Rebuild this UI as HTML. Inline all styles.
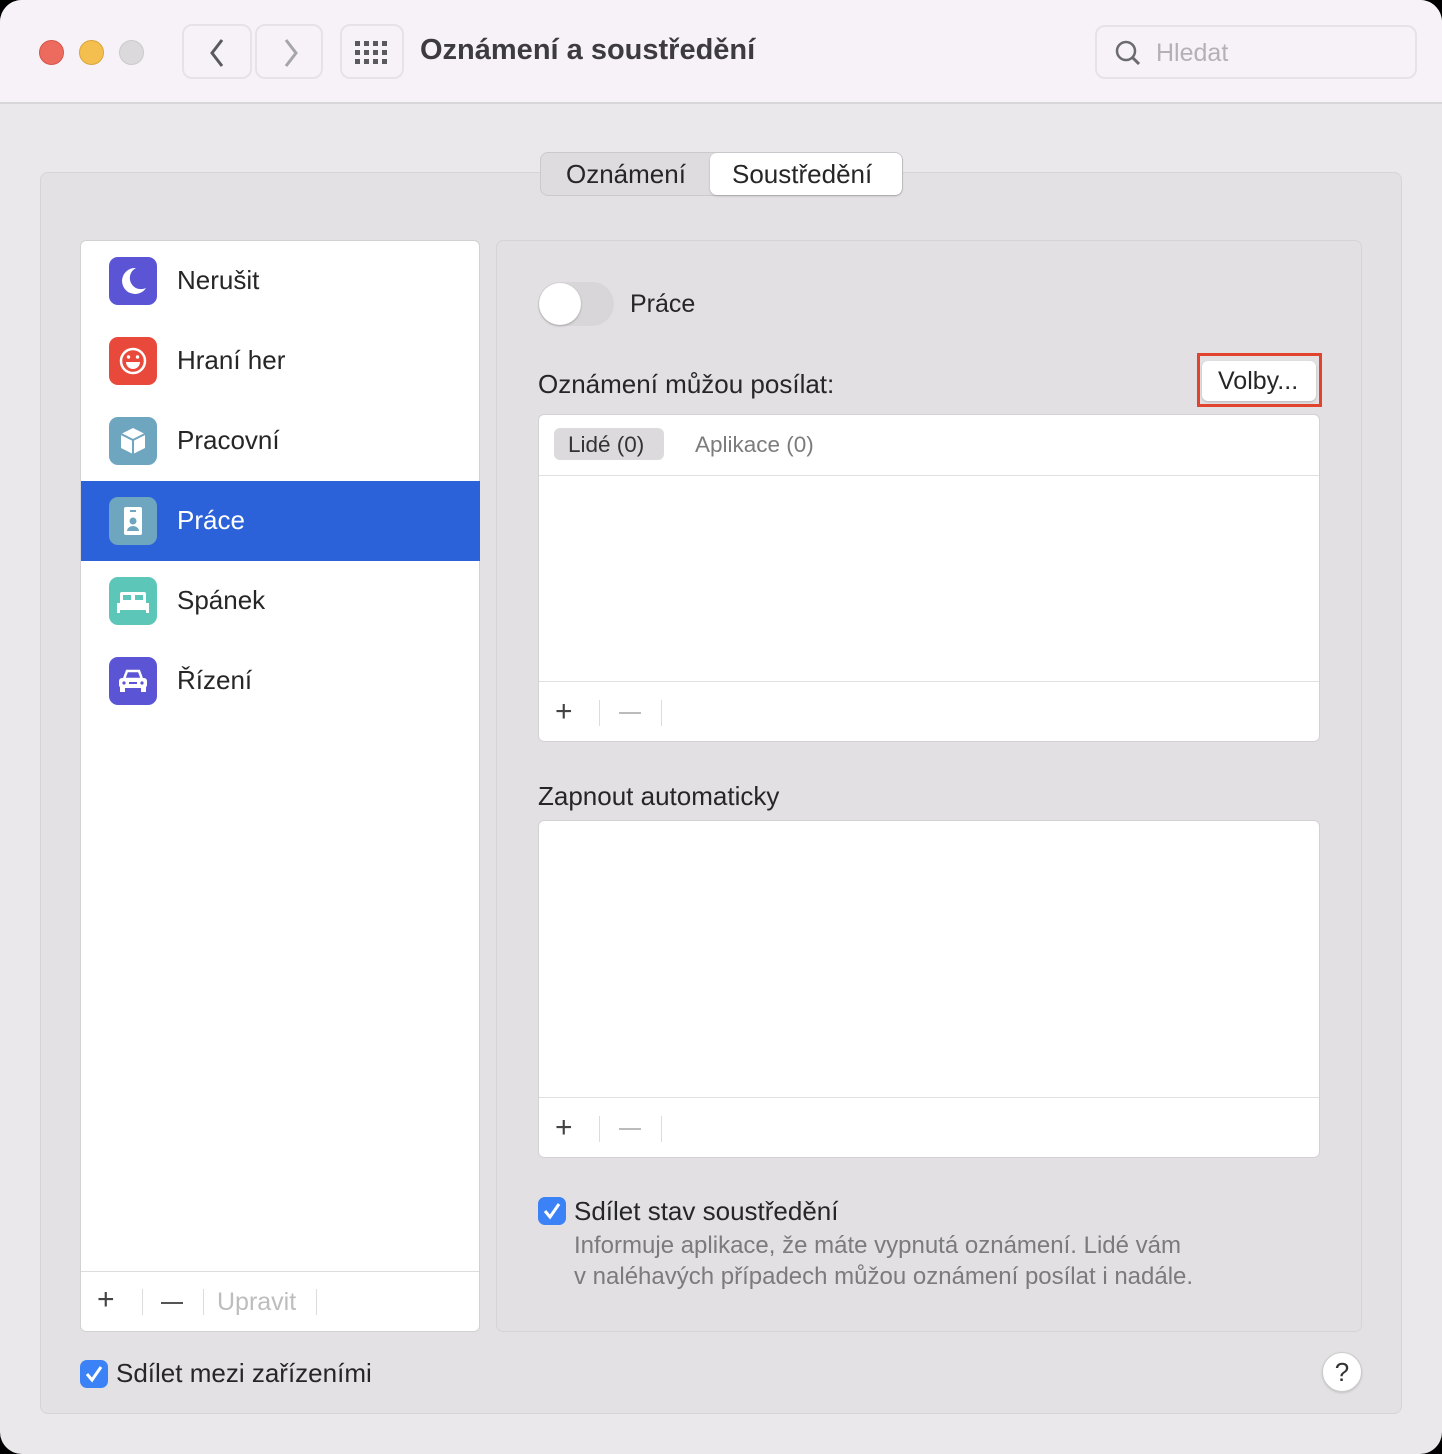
<!DOCTYPE html>
<html><head><meta charset="utf-8"><style>
*{margin:0;padding:0;box-sizing:border-box}
body{width:1442px;height:1454px;background:#000;font-family:"Liberation Sans",sans-serif;color:#262626;position:relative;overflow:hidden}
.win{position:absolute;left:0;top:0;width:1442px;height:1454px;background:#ebe8eb;border-radius:22px;overflow:hidden}
.tb{position:absolute;left:0;top:0;width:1442px;height:104px;background:#f6f2f7;border-bottom:2px solid #d9d6d9}
.a{position:absolute}
.dot{position:absolute;top:40px;width:25px;height:25px;border-radius:50%}
.btn{position:absolute;top:24px;height:55px;border:2px solid #e6e2e7;border-radius:10px}
.t{position:absolute;white-space:nowrap}
.box{position:absolute;background:#fff;border:1px solid #d3d1d4;border-radius:6px}
.ic{position:absolute;left:28px;width:48px;height:48px;border-radius:9px}
.row{position:absolute;left:0;width:399px;height:80px}
.row .t{left:96px;top:24px;font-size:26px}
.sep{position:absolute;width:1px;height:26px;background:#dcdcdc}
.cb{position:absolute;width:28px;height:28px;border-radius:7px;background:#3b82f6}
</style></head><body>
<div class="win">
<div class="tb">
<div class="dot" style="left:39px;background:#ec6a5e;border:1px solid #d5544a"></div>
<div class="dot" style="left:79px;background:#f4bf4f;border:1px solid #d9a43a"></div>
<div class="dot" style="left:119px;background:#dcd9dd;border:1px solid #ccc9cd"></div>
<div class="btn" style="left:182px;width:70px"><svg class="a" style="left:22px;top:12px" width="24" height="30"><path d="M16 2 L6 15 L16 28" stroke="#5a5a5e" stroke-width="3" fill="none"/></svg></div>
<div class="btn" style="left:255px;width:68px"><svg class="a" style="left:22px;top:12px" width="24" height="30"><path d="M7 2 L17 15 L7 28" stroke="#a6a5a8" stroke-width="3" fill="none"/></svg></div>
<div class="btn" style="left:340px;width:64px"><svg class="a" style="left:12px;top:14px" width="38" height="26"><g fill="#5a5a5e"><rect x="1" y="1" width="5" height="5"/><rect x="10" y="1" width="5" height="5"/><rect x="19" y="1" width="5" height="5"/><rect x="28" y="1" width="5" height="5"/><rect x="1" y="10" width="5" height="5"/><rect x="10" y="10" width="5" height="5"/><rect x="19" y="10" width="5" height="5"/><rect x="28" y="10" width="5" height="5"/><rect x="1" y="19" width="5" height="5"/><rect x="10" y="19" width="5" height="5"/><rect x="19" y="19" width="5" height="5"/><rect x="28" y="19" width="5" height="5"/></g></svg></div>
<div class="t" style="left:420px;top:34px;font-size:29px;font-weight:bold;color:#3d3b40">Oznámení a soustředění</div>
<div class="a" style="left:1095px;top:25px;width:322px;height:54px;border:2px solid #e6e2e7;border-radius:10px"></div>
<svg class="a" style="left:1113px;top:38px" width="32" height="30"><circle cx="13" cy="13" r="9" stroke="#6b6a6e" stroke-width="2.5" fill="none"/><path d="M19.5 19.5 L26 26" stroke="#6b6a6e" stroke-width="3"/></svg>
<div class="t" style="left:1156px;top:39px;font-size:25px;color:#b4b1b5">Hledat</div>
</div>

<div class="a" style="left:40px;top:172px;width:1362px;height:1242px;background:#e3e1e4;border:1px solid #d6d4d7;border-radius:8px"></div>
<div class="a" style="left:540px;top:152px;width:363px;height:44px;background:#dedcdf;border:1px solid #ccc9cd;border-radius:8px"></div>
<div class="a" style="left:710px;top:153px;width:192px;height:42px;background:#fff;border-radius:7px;box-shadow:0 1px 2px rgba(0,0,0,.2)"></div>
<div class="t" style="left:566px;top:159px;font-size:26px">Oznámení</div>
<div class="t" style="left:732px;top:159px;font-size:26px">Soustředění</div>

<div class="box" style="left:80px;top:240px;width:400px;height:1092px">
<div class="row" style="top:0"><div class="ic" style="top:16px;background:#5b55d6"><svg width="48" height="48"><path d="M27 11 A13 13 0 1 0 37 31 A11 11 0 0 1 27 11Z" fill="#fff"/></svg></div><div class="t">Nerušit</div></div>
<div class="row" style="top:80px"><div class="ic" style="top:16px;background:#e9493b"><svg width="48" height="48"><circle cx="24" cy="24" r="12" stroke="#fff" stroke-width="2.5" fill="none"/><circle cx="19.5" cy="20" r="1.7" fill="#fff"/><circle cx="28.5" cy="20" r="1.7" fill="#fff"/><path d="M17 25 H31 A7 7 0 0 1 17 25Z" fill="#fff"/></svg></div><div class="t">Hraní her</div></div>
<div class="row" style="top:160px"><div class="ic" style="top:16px;background:#6ea6bf"><svg width="48" height="48"><path d="M24 11 L36 17 V31 L24 37 L12 31 V17Z" fill="#fff"/><path d="M12 17 L24 23 L36 17 M24 23 V37" stroke="#6ea6bf" stroke-width="2" fill="none"/></svg></div><div class="t">Pracovní</div></div>
<div class="row" style="top:240px;background:#2b62d9"><div class="ic" style="top:16px;background:#6ea6bf"><svg width="48" height="48"><rect x="15" y="10" width="18" height="28" rx="2" fill="#fff"/><rect x="21" y="13" width="6" height="2" fill="#6ea6bf"/><circle cx="24" cy="24" r="3.5" fill="#6ea6bf"/><path d="M18 34 A6 5 0 0 1 30 34Z" fill="#6ea6bf"/></svg></div><div class="t" style="color:#fff">Práce</div></div>
<div class="row" style="top:320px"><div class="ic" style="top:16px;background:#5cc6b8"><svg width="48" height="48"><rect x="11" y="15" width="26" height="12" rx="2" fill="#fff"/><rect x="14" y="18" width="8" height="5" fill="#5cc6b8"/><rect x="26" y="18" width="8" height="5" fill="#5cc6b8"/><rect x="8" y="26" width="32" height="7" fill="#fff"/><rect x="8" y="32" width="3" height="4" fill="#fff"/><rect x="37" y="32" width="3" height="4" fill="#fff"/></svg></div><div class="t">Spánek</div></div>
<div class="row" style="top:400px"><div class="ic" style="top:16px;background:#5b55d6"><svg width="48" height="48"><path d="M15 22 L18 14 H30 L33 22Z" fill="none" stroke="#fff" stroke-width="2.5"/><rect x="10" y="21" width="28" height="10" rx="3" fill="#fff"/><rect x="11" y="30" width="5" height="5" fill="#fff"/><rect x="32" y="30" width="5" height="5" fill="#fff"/><circle cx="15" cy="26" r="1.6" fill="#5b55d6"/><circle cx="33" cy="26" r="1.6" fill="#5b55d6"/><rect x="20" y="25" width="8" height="2" fill="#5b55d6"/></svg></div><div class="t">Řízení</div></div>
<div class="a" style="left:0;top:1030px;width:398px;height:1px;background:#dcdcdc"></div>
<div class="t" style="left:16px;top:1042px;font-size:30px;color:#444">+</div>
<div class="sep" style="left:61px;top:1048px"></div>
<div class="a" style="left:80px;top:1061px;width:22px;height:2px;background:#555"></div>
<div class="sep" style="left:122px;top:1048px"></div>
<div class="t" style="left:136px;top:1047px;font-size:25px;color:#bdbdbd">Upravit</div>
<div class="sep" style="left:235px;top:1048px"></div>
</div>

<div class="a" style="left:496px;top:240px;width:866px;height:1092px;background:#e2e0e3;border:1px solid #d6d4d7;border-radius:7px"></div>
<div class="a" style="left:538px;top:282px;width:76px;height:44px;background:#d8d6d9;border-radius:22px"></div>
<div class="a" style="left:539px;top:283px;width:42px;height:42px;background:#fff;border-radius:50%;box-shadow:0 1px 2px rgba(0,0,0,.25)"></div>
<div class="t" style="left:630px;top:290px;font-size:25px">Práce</div>
<div class="t" style="left:538px;top:369px;font-size:26px">Oznámení můžou posílat:</div>
<div class="a" style="left:1197px;top:353px;width:125px;height:54px;border:3px solid #e2432c"></div>
<div class="a" style="left:1202px;top:361px;width:114px;height:40px;background:#fff;border-radius:6px;box-shadow:0 1px 2px rgba(0,0,0,.2)"></div>
<div class="t" style="left:1218px;top:367px;font-size:25px">Volby...</div>

<div class="box" style="left:538px;top:414px;width:782px;height:328px">
<div class="a" style="left:15px;top:13px;width:110px;height:32px;background:#dcdadd;border-radius:6px"></div>
<div class="t" style="left:29px;top:17px;font-size:22.5px;color:#333">Lidé (0)</div>
<div class="t" style="left:156px;top:17px;font-size:22.5px;color:#7c7c7c">Aplikace (0)</div>
<div class="a" style="left:0;top:60px;width:780px;height:1px;background:#e0e0e0"></div>
<div class="a" style="left:0;top:266px;width:780px;height:1px;background:#e0e0e0"></div>
<div class="t" style="left:16px;top:280px;font-size:30px;color:#444">+</div>
<div class="sep" style="left:60px;top:285px"></div>
<div class="a" style="left:80px;top:297px;width:22px;height:2px;background:#bbb"></div>
<div class="sep" style="left:122px;top:285px"></div>
</div>

<div class="t" style="left:538px;top:781px;font-size:26px">Zapnout automaticky</div>
<div class="box" style="left:538px;top:820px;width:782px;height:338px">
<div class="a" style="left:0;top:276px;width:780px;height:1px;background:#e0e0e0"></div>
<div class="t" style="left:16px;top:290px;font-size:30px;color:#444">+</div>
<div class="sep" style="left:60px;top:295px"></div>
<div class="a" style="left:80px;top:307px;width:22px;height:2px;background:#bbb"></div>
<div class="sep" style="left:122px;top:295px"></div>
</div>

<div class="cb" style="left:538px;top:1197px"><svg width="28" height="28"><path d="M7 14 L12 20 L21 7" stroke="#fff" stroke-width="3" fill="none"/></svg></div>
<div class="t" style="left:574px;top:1196px;font-size:26px">Sdílet stav soustředění</div>
<div class="t" style="left:574px;top:1231px;font-size:24px;color:#7b7a7d;line-height:30.5px">Informuje aplikace, že máte vypnutá oznámení. Lidé vám<br>v naléhavých případech můžou oznámení posílat i nadále.</div>

<div class="cb" style="left:80px;top:1360px"><svg width="28" height="28"><path d="M7 14 L12 20 L21 7" stroke="#fff" stroke-width="3" fill="none"/></svg></div>
<div class="t" style="left:116px;top:1358px;font-size:26px">Sdílet mezi zařízeními</div>
<div class="a" style="left:1322px;top:1352px;width:40px;height:40px;border-radius:50%;background:#fff;border:1px solid #ccc;box-shadow:0 1px 2px rgba(0,0,0,.15);text-align:center;font-size:26px;line-height:38px;color:#333">?</div>
</div>
</body></html>
